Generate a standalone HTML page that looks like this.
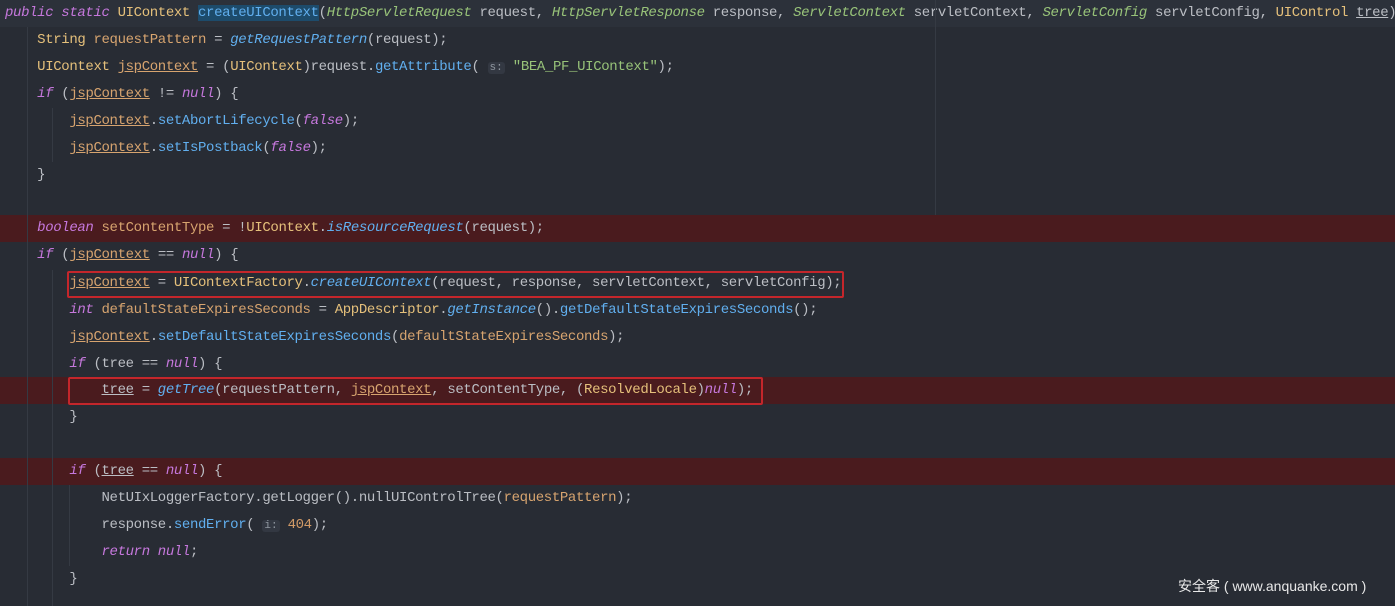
<!DOCTYPE html>
<html><head><meta charset="utf-8"><style>
body{margin:0;width:1395px;height:606px;overflow:hidden;background:#282c34;font-family:"Liberation Mono",monospace;font-size:14px;letter-spacing:-0.36px;color:#bbbec4}
.l{position:absolute;left:0;width:1395px;height:27px;line-height:27px;white-space:pre;padding-left:5px;box-sizing:border-box}
.r{background:#4a1b1e}
.k{color:#c678dd;font-style:italic}
.t{color:#e5c07b}
.v{color:#d7a46f}
.u{text-decoration:underline}
.m{color:#61afef}
.mi{color:#61afef;font-style:italic}
.p{color:#98c379;font-style:italic}
.s{color:#98c379}
.n{color:#d19a66}
.h{background:#1d4b6b}
.hint{background:#333842;color:#9097a0;font-size:11px;border-radius:3px;padding:0 2px;letter-spacing:0}
.g{position:absolute;width:1px;background:#353a43}
.box{position:absolute;border:2px solid #c4262b;box-sizing:border-box;border-radius:2px}
</style></head><body>
<div class="l" style="top:0;background:#2c313a"><span class="k">public static</span> <span class="t">UIContext</span> <span class="h m">createUIContext</span>(<span class="p">HttpServletRequest</span> request, <span class="p">HttpServletResponse</span> response, <span class="p">ServletContext</span> servletContext, <span class="p">ServletConfig</span> servletConfig, <span class="t">UIControl</span> <span class="u">tree</span>)</div>
<div class="l" style="top:27px">    <span class="t">String</span> <span class="v">requestPattern</span> = <span class="mi">getRequestPattern</span>(request);</div>
<div class="l" style="top:54px">    <span class="t">UIContext</span> <span class="v u">jspContext</span> = (<span class="t">UIContext</span>)request.<span class="m">getAttribute</span>( <span class="hint">s:</span> <span class="s">"BEA_PF_UIContext"</span>);</div>
<div class="l" style="top:81px">    <span class="k">if</span> (<span class="v u">jspContext</span> != <span class="k">null</span>) {</div>
<div class="l" style="top:108px">        <span class="v u">jspContext</span>.<span class="m">setAbortLifecycle</span>(<span class="k">false</span>);</div>
<div class="l" style="top:135px">        <span class="v u">jspContext</span>.<span class="m">setIsPostback</span>(<span class="k">false</span>);</div>
<div class="l" style="top:162px">    }</div>
<div class="l r" style="top:215px;height:27px">    <span class="k">boolean</span> <span class="v">setContentType</span> = !<span class="t">UIContext</span>.<span class="mi">isResourceRequest</span>(request);</div>
<div class="l" style="top:242px">    <span class="k">if</span> (<span class="v u">jspContext</span> == <span class="k">null</span>) {</div>
<div class="l" style="top:270px">        <span class="v u">jspContext</span> = <span class="t">UIContextFactory</span>.<span class="mi">createUIContext</span>(request, response, servletContext, servletConfig);</div>
<div class="l" style="top:297px">        <span class="k">int</span> <span class="v">defaultStateExpiresSeconds</span> = <span class="t">AppDescriptor</span>.<span class="mi">getInstance</span>().<span class="m">getDefaultStateExpiresSeconds</span>();</div>
<div class="l" style="top:324px">        <span class="v u">jspContext</span>.<span class="m">setDefaultStateExpiresSeconds</span>(<span class="v">defaultStateExpiresSeconds</span>);</div>
<div class="l" style="top:351px">        <span class="k">if</span> (tree == <span class="k">null</span>) {</div>
<div class="l r" style="top:377px">            <span class="u">tree</span> = <span class="mi">getTree</span>(requestPattern, <span class="v u">jspContext</span>, setContentType, (<span class="t">ResolvedLocale</span>)<span class="k">null</span>);</div>
<div class="l" style="top:404px">        }</div>
<div class="l r" style="top:458px">        <span class="k">if</span> (<span class="u">tree</span> == <span class="k">null</span>) {</div>
<div class="l" style="top:485px">            NetUIxLoggerFactory.getLogger().nullUIControlTree(<span class="v">requestPattern</span>);</div>
<div class="l" style="top:512px">            response.<span class="m">sendError</span>( <span class="hint">i:</span> <span class="n">404</span>);</div>
<div class="l" style="top:539px">            <span class="k">return null</span>;</div>
<div class="l" style="top:566px">        }</div>
<div class="g" style="left:935px;top:0;height:215px"></div>
<div class="g" style="left:27px;top:27px;height:579px"></div>
<div class="g" style="left:52px;top:108px;height:54px"></div>
<div class="g" style="left:52px;top:270px;height:336px"></div>
<div class="g" style="left:69px;top:485px;height:81px"></div>
<div class="box" style="left:67px;top:271px;width:777px;height:27px"></div>
<div class="box" style="left:68px;top:377px;width:695px;height:28px"></div>
<div style="position:absolute;left:1178px;top:576px;font-family:'Liberation Sans','Noto Sans CJK SC',sans-serif;font-size:14px;letter-spacing:0;color:#e8e8e8">安全客 ( www.anquanke.com )</div>
</body></html>
